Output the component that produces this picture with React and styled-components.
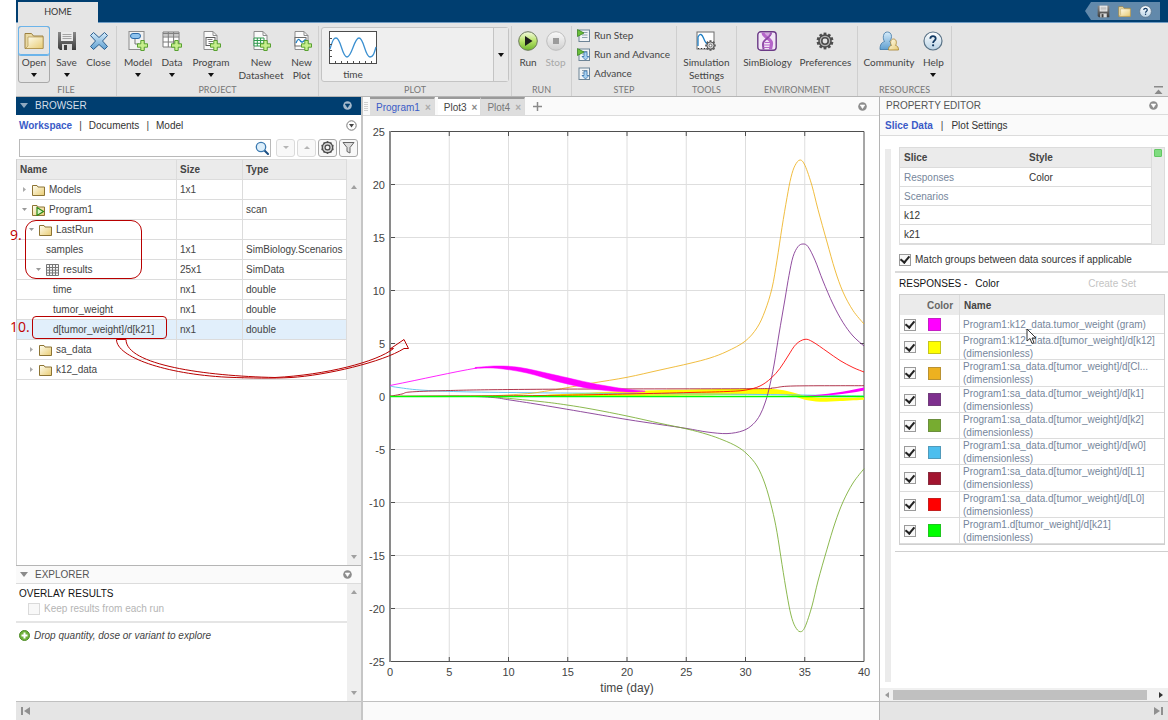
import React from "react";
import styled, { createGlobalStyle } from "styled-components";

const navy = "#003e70";
const ribbonGrey = "#e5e5e5";
const line = "#dcdcdc";
const sans = `"Liberation Sans", Arial, sans-serif`;
const ui = `Lato, "Open Sans", sans-serif`;

/* ---------- data ---------- */

const workspaceRows = [
  { level: 0, caret: "right", icon: "folder", name: "Models", size: "1x1", type: "" },
  { level: 0, caret: "down", icon: "program", name: "Program1", size: "", type: "scan" },
  { level: 1, caret: "down", icon: "folder", name: "LastRun", size: "", type: "" },
  { level: 2, name: "samples", size: "1x1", type: "SimBiology.Scenarios" },
  { level: 2, caret: "down", icon: "grid", name: "results", size: "25x1", type: "SimData" },
  { level: 3, name: "time", size: "nx1", type: "double" },
  { level: 3, name: "tumor_weight", size: "nx1", type: "double" },
  { level: 3, name: "d[tumor_weight]/d[k21]", size: "nx1", type: "double", selected: true },
  { level: 1, caret: "right", icon: "folder", name: "sa_data", size: "", type: "" },
  { level: 1, caret: "right", icon: "folder", name: "k12_data", size: "", type: "" },
];

const slices = [
  { name: "Responses", style: "Color", muted: true },
  { name: "Scenarios", style: "", muted: true },
  { name: "k12", style: "" },
  { name: "k21", style: "" },
];

const responses = [
  { color: "#ff00ff", name: "Program1:k12_data.tumor_weight (gram)" },
  { color: "#ffff00", name: "Program1:k12_data.d[tumor_weight]/d[k12]", unit: "(dimensionless)" },
  { color: "#edb120", name: "Program1:sa_data.d[tumor_weight]/d[Cl...", unit: "(dimensionless)" },
  { color: "#7e2f8e", name: "Program1:sa_data.d[tumor_weight]/d[k1]", unit: "(dimensionless)" },
  { color: "#77ac30", name: "Program1:sa_data.d[tumor_weight]/d[k2]", unit: "(dimensionless)" },
  { color: "#4dbeee", name: "Program1:sa_data.d[tumor_weight]/d[w0]", unit: "(dimensionless)" },
  { color: "#a2142f", name: "Program1:sa_data.d[tumor_weight]/d[L1]", unit: "(dimensionless)" },
  { color: "#ff0000", name: "Program1:sa_data.d[tumor_weight]/d[L0]", unit: "(dimensionless)" },
  { color: "#00ff00", name: "Program1.d[tumor_weight]/d[k21]", unit: "(dimensionless)" },
];

const curves = [
  {
    color: "#4dbeee",
    points: [[27, 270], [34, 271.3], [57, 274], [97, 275.7], [164, 276.7], [264, 277.5], [400, 278.5], [501, 280]],
  },
  {
    color: "#edb120",
    points: [
      [27, 280.5], [110, 280.3], [160, 278], [184, 275], [204, 271.7], [230, 267], [264, 261.3], [297, 254], [327, 247.3],
      [347, 242], [364, 235.4], [382, 225.3], [394, 211.8], [402, 194.9], [409, 172.2], [414, 144.2], [419, 111.4],
      [424, 81.6], [428, 61.3], [432, 49.5], [437, 44], [442, 49.5], [449, 69.8], [455, 93.5], [464, 126],
      [472, 154], [480, 176], [490, 194.5], [501, 208],
    ],
  },
  {
    color: "#7e2f8e",
    points: [
      [27, 280.5], [100, 280.3], [130, 281.5], [147, 284], [177, 288.7], [230, 297.7], [264, 303.5], [297, 308.5],
      [324, 312.5], [344, 316], [364, 317.6], [380, 314.7], [390, 308.3], [397, 299], [402, 287], [406, 273],
      [411, 249], [416, 218], [422, 183], [426, 159.4], [430, 140.8], [435, 130.6], [440, 128], [445, 130.6],
      [452, 144.2], [460, 165], [470, 188.1], [480, 206.5], [490, 220], [501, 230],
    ],
  },
  {
    color: "#77ac30",
    points: [
      [27, 280.5], [110, 280.3], [130, 281], [177, 285.5], [204, 289], [230, 293.3], [264, 300], [297, 307.3],
      [324, 313], [344, 318.3], [360, 324], [374, 330.5], [384, 338], [394, 350], [402, 368], [409, 392.6],
      [414, 416.3], [419, 448.4], [424, 478.8], [428, 499], [432, 510.3], [437, 515.7], [442, 511], [449, 490],
      [455, 465], [464, 433.2], [472, 407], [480, 385.9], [490, 367], [501, 352.7],
    ],
  },
  {
    color: "#a2142f",
    points: [[27, 280.3], [39, 278], [47, 276], [80, 274.7], [130, 273.7], [230, 273], [390, 272.7], [410, 272], [430, 270], [501, 269.7]],
  },
  {
    color: "#ff0000",
    points: [
      [27, 280.3], [177, 279.5], [264, 278], [327, 276.5], [364, 275.5], [383, 274], [397, 270], [408, 262.3],
      [417, 252.3], [425, 240], [433, 228.3], [442, 223.3], [450, 226], [464, 235.5], [477, 244.5], [490, 251.5], [501, 256],
    ],
  },
];

// Catmull-Rom through the points, written as cubic segments
const smooth = (pts, start = "M") => {
  let d = `${start}${pts[0][0]} ${pts[0][1]}`;
  for (let i = 0; i < pts.length - 1; i++) {
    const a = pts[i - 1] || pts[i];
    const b = pts[i];
    const c = pts[i + 1];
    const e = pts[i + 2] || c;
    d += `C${b[0] + (c[0] - a[0]) / 6} ${b[1] + (c[1] - a[1]) / 6} ${c[0] - (e[0] - b[0]) / 6} ${c[1] - (e[1] - b[1]) / 6} ${c[0]} ${c[1]}`;
  }
  return d;
};

const band = (top, bottom) => `${smooth(top)}${smooth(bottom, "L")}Z`;

const magentaBand = band(
  [[112, 251.5], [134, 250], [157, 251.5], [190, 258.5], [230, 267.5], [264, 273.2], [282, 275]],
  [[282, 275.5], [264, 276], [230, 273], [197, 266.2], [164, 257], [134, 252.3], [112, 252.3]]
);

const yellowBand = band(
  [[170, 279.5], [264, 275], [330, 273.5], [397, 272.8], [417, 273.8], [430, 276.6], [441, 279.5], [457, 281.7], [501, 281.4]],
  [[501, 283.7], [477, 285], [457, 285.7], [443, 284], [433, 281], [423, 279], [403, 278], [330, 279.5], [170, 280.5]]
);

/* ---------- icons ---------- */

const Defs = () => (
  <HiddenSvg width="0" height="0" aria-hidden="true">
    <defs>
      <linearGradient id="gFolder" x1="0" y1="0" x2="1" y2="1">
        <stop offset="0" stopColor="#fffef2" />
        <stop offset="1" stopColor="#e8cb72" />
      </linearGradient>
      <linearGradient id="gGreen" x1="0" y1="0" x2="0" y2="1">
        <stop offset="0" stopColor="#f4fbe0" />
        <stop offset="0.5" stopColor="#b9e36a" />
        <stop offset="1" stopColor="#6fb52c" />
      </linearGradient>
      <linearGradient id="gBlue" x1="0" y1="0" x2="0" y2="1">
        <stop offset="0" stopColor="#d5ebfa" />
        <stop offset="1" stopColor="#5f9fd0" />
      </linearGradient>
      <linearGradient id="gSteel" x1="0" y1="0" x2="0" y2="1">
        <stop offset="0" stopColor="#8a8a8a" />
        <stop offset="1" stopColor="#3c3c3c" />
      </linearGradient>
      <linearGradient id="gPale" x1="0" y1="0" x2="0" y2="1">
        <stop offset="0" stopColor="#ffffff" />
        <stop offset="1" stopColor="#b9d3e6" />
      </linearGradient>
      <linearGradient id="gGrey" x1="0" y1="0" x2="0" y2="1">
        <stop offset="0" stopColor="#fafafa" />
        <stop offset="1" stopColor="#cfcfcf" />
      </linearGradient>
    </defs>
  </HiddenSvg>
);

const Icon = ({ size = 20, box = 20, children }) => (
  <svg width={size} height={size} viewBox={`0 0 ${box} ${box}`} fill="none" aria-hidden="true">
    {children}
  </svg>
);

const FolderIcon = ({ size = 20 }) => (
  <Icon size={size}>
    <path d="M1 17.500V2.500h6.500l2 2.500H19v12.500z" fill="#e9d9a4" stroke="#9c8040" />
    <path d="M4 6h15v11.500H1.500L4 15z" fill="url(#gFolder)" stroke="#a88a42" strokeWidth="0.600" />
  </Icon>
);

const SaveIcon = ({ size = 20 }) => (
  <Icon size={size}>
    <path d="M1 1h18v18H3l-2-2z" fill="url(#gSteel)" />
    <rect x="4" y="1" width="12" height="9" fill="#ececec" />
    <path d="M5.500 3.500h9M5.500 5.500h9M5.500 7.500h9" stroke="#a5a5a5" />
    <rect x="5" y="13" width="10" height="6" fill="#dadada" />
    <rect x="7" y="14" width="3" height="5" fill="#3f3f3f" />
  </Icon>
);

const CloseIcon = () => (
  <Icon>
    <path
      d="M1.500 4.500l3-3L10 6.500l5.500-5 3 3L13.500 10l5 5.500-3 3-5.500-5-5.500 5-3-3 5-5.500z"
      fill="url(#gBlue)"
      stroke="#2d5f8f"
      strokeLinejoin="round"
    />
  </Icon>
);

const Plus = () => (
  <path
    d="M12.800 9.500h3.400v3.300h3.300v3.400h-3.300v3.300h-3.400v-3.300H9.500v-3.400h3.300z"
    fill="#c6ee8c"
    stroke="#4c9a24"
    strokeWidth="0.900"
  />
);

const ModelIcon = () => (
  <Icon>
    <rect x="1" y="0.500" width="15" height="18" fill="#f2f2f2" stroke="#8c8c8c" />
    <rect x="2.500" y="2.500" width="10" height="5" rx="2.500" fill="#8ec3ee" stroke="#2b6aa8" />
    <path d="M7 8v5h4" stroke="#777" />
    <Plus />
  </Icon>
);

const DataIcon = () => (
  <Icon>
    <path d="M1 1h16v15H1z" fill="#fff" stroke="#7a7a7a" />
    <path d="M1 2.500h16M1 6h16M1 11h16M6.300 1v15M11.600 1v15" stroke="#7a7a7a" />
    <path d="M1.500 1.500h15v4h-15z" fill="#8a8a8a" fillOpacity="0.450" />
    <Plus />
  </Icon>
);

const Sheet = () => <path d="M3 0.500h9l4 4v14H3z" fill="#fafafa" stroke="#8c8c8c" />;

const ProgramIcon = () => (
  <Icon>
    <Sheet />
    <path d="M12 0.500v4h4" stroke="#8c8c8c" />
    <rect x="5" y="6.500" width="9" height="8" fill="#fff" stroke="#5c5c5c" />
    <path d="M6.500 8.500h5M7.500 10.500h5M7.500 12.500h4" stroke="#777" />
    <Plus />
  </Icon>
);

const DatasheetIcon = () => (
  <Icon>
    <Sheet />
    <path d="M12 0.500v4h4" stroke="#8c8c8c" />
    <path d="M3 7h10v8H3zM3 9.500h10M3 12.300h10M6.300 7v8M9.600 7v8" fill="#fff" stroke="#2f9a4e" />
    <Plus />
  </Icon>
);

const PlotIcon = () => (
  <Icon>
    <Sheet />
    <path d="M12 0.500v4h4" stroke="#8c8c8c" />
    <rect x="3" y="6.500" width="11" height="8.500" fill="#fff" stroke="#6c6c6c" />
    <path d="M4 12c2-5 3-4 4.500-2s2.500 1 5-1.500" stroke="#1f7fc4" strokeWidth="1.300" />
    <Plus />
  </Icon>
);

const RunIcon = () => (
  <Icon>
    <circle cx="10" cy="10" r="9.300" fill="url(#gGreen)" stroke="#6c7a5c" />
    <path d="M7 5l7.500 5L7 15z" fill="#1d1d1d" />
  </Icon>
);

const StopIcon = () => (
  <Icon>
    <circle cx="10" cy="10" r="9.300" fill="url(#gGrey)" stroke="#bdbdbd" />
    <rect x="7" y="7" width="6" height="6" fill="#9b9b9b" />
  </Icon>
);

const StepIcon = ({ play, arrow }) => (
  <Icon size={13} box={13}>
    <rect x="2" y="1" width="10.500" height="11.500" fill="#f1f4f6" stroke="#6d8496" />
    <path d="M5 3.500h5.500M5 6h5.500M5 8.500h5.500" stroke="#8fa2b0" />
    {arrow && <path d="M7 4v4.500H5l3.500 3.500 3.500-3.500h-2V4z" fill="#a9d2f0" stroke="#2b6aa8" strokeWidth="0.700" />}
    {play && <path d="M0.500 0.500L7 4 0.500 7.500z" fill="#6bbf3a" stroke="#2c7a16" strokeWidth="0.700" />}
  </Icon>
);

const gearTeeth = (cx, cy, r, width, color, count = 10) =>
  Array.from({ length: count }, (_, i) => (
    <rect
      key={i}
      x={cx - width / 2}
      y={cy - r}
      width={width}
      height={r * 0.4}
      fill={color}
      transform={`rotate(${(i * 360) / count} ${cx} ${cy})`}
    />
  ));

const SettingsIcon = () => (
  <Icon>
    <rect x="1" y="1" width="17" height="17" fill="#fff" stroke="#6d6d6d" />
    <path d="M2 15V6c2-4 4-3 5.500 1s2.500 6 4.500 6" stroke="#1f7fc4" strokeWidth="1.300" />
    <path d="M2 17.500h10" stroke="#333" strokeDasharray="1 2" />
    {gearTeeth(14.5, 14.5, 5.3, 2, "#5d5d5d", 8)}
    <circle cx="14.500" cy="14.500" r="3.600" fill="#d6d6d6" stroke="#555" />
    <circle cx="14.500" cy="14.500" r="1.400" fill="#fff" stroke="#555" strokeWidth="0.800" />
  </Icon>
);

const SimBiologyIcon = () => (
  <Icon>
    <rect x="0.800" y="0.800" width="18.400" height="18.400" rx="3" fill="#f2e6f6" stroke="#6b3a86" strokeWidth="1.400" />
    <path d="M6 1.500c0 5 8.500 6 8.500 10.500 0 3-1 5-1 6.500" stroke="#b565c9" strokeWidth="3.200" />
    <path d="M14 1.500C14 7 6 8 6 13c0 3 .500 4 .500 5.500" stroke="#8d4aa6" strokeWidth="2" />
    <path d="M6 3h8M7.500 5h5M8 11.500h6M6.500 14h7M6.500 16.500h7" stroke="#b565c9" strokeWidth="1.200" />
  </Icon>
);

const GearIcon = () => (
  <Icon>
    {gearTeeth(10, 10, 8.4, 2.8, "#4d4d4d", 10)}
    <circle cx="10" cy="10" r="6" fill="#b5b5b5" stroke="#4d4d4d" strokeWidth="1.400" />
    <circle cx="10" cy="10" r="3.200" fill="#e5e5e5" stroke="#4d4d4d" strokeWidth="1.600" />
  </Icon>
);

const SmallGearIcon = () => (
  <Icon size={13} box={13}>
    <circle cx="6.500" cy="6.500" r="5.200" fill="#d0d0d0" stroke="#4f4f4f" strokeWidth="1.400" />
    <circle cx="6.500" cy="6.500" r="2.500" fill="#f8f8f8" stroke="#4f4f4f" strokeWidth="1.400" />
    {gearTeeth(6.5, 6.5, 6.4, 1.4, "#4f4f4f", 10).map((tooth) => tooth)}
    <circle cx="6.500" cy="6.500" r="3.900" stroke="#d0d0d0" strokeWidth="1.200" />
  </Icon>
);

const CommunityIcon = () => (
  <Icon>
    <path
      d="M1 18.500c0-5 1.500-7 4.500-8C4.500 9 4 7 4.500 4.500 5 2 6.500 1 8.500 1s4 1.500 4 4.500c0 2-1 4-2 5 1.500 1 2 3 2 8z"
      fill="url(#gBlue)"
      stroke="#3f77a6"
      strokeWidth="0.800"
    />
    <path
      d="M9.500 19c0-3 1-4 3-4.600-1.500-2-1.200-6.400 2-6.400s3.500 4.400 2 6.400c2 .600 3 1.600 3 4.600z"
      fill="url(#gFolder)"
      stroke="#a8842d"
      strokeWidth="0.800"
    />
  </Icon>
);

const HelpIcon = ({ size = 20 }) => (
  <Icon size={size}>
    <circle cx="10" cy="10" r="9" fill="url(#gPale)" stroke="#5a7387" strokeWidth="1.200" />
    <path d="M7.300 7.800c0-3.600 5.400-3.400 5.400-.300 0 2-2.600 2.300-2.600 4.500" stroke="#123a63" strokeWidth="1.800" />
    <circle cx="10.100" cy="14.300" r="1.100" fill="#123a63" />
  </Icon>
);

const WaveThumb = () => (
  <svg width="48" height="33" viewBox="0 0 48 33" fill="none" aria-hidden="true">
    <rect x="0.500" y="0.500" width="47" height="32" fill="#fff" stroke="#4c4c4c" />
    <path d="M1 18C4 8 5 7 7 7c5 0 6 19 11 19S25 7 30 7s6 19 11 19c3 0 4-3 6-10" stroke="#3a8fd0" strokeWidth="1.300" />
    <path d="M1 7.500h2M1 13.500h2M1 19.500h2M1 25.500h2M6.500 32v-2M12.500 32v-2M18.500 32v-2M24.500 32v-2M30.500 32v-2M36.500 32v-2M42.500 32v-2" stroke="#4c4c4c" />
  </svg>
);

const SearchIcon = () => (
  <Icon size={14} box={14}>
    <path d="M9 9l4 4" stroke="#1c4f82" strokeWidth="2" strokeLinecap="round" />
    <circle cx="6" cy="6" r="4.700" fill="#dceefa" stroke="#3b79b0" strokeWidth="1.300" />
  </Icon>
);

const FilterIcon = () => (
  <Icon size={13} box={13}>
    <path d="M1 1.500h11L8 6.500V12l-3-1.500v-4z" fill="#ddd" stroke="#666" />
  </Icon>
);

const RoundMenuIcon = ({ ring = "#8d8d8d", fill = "#fff" }) => (
  <Icon size={9} box={9}>
    <circle cx="4.500" cy="4.500" r="4.300" fill={ring} />
    <path d="M2.200 3h4.600L4.500 6.600z" fill={fill} stroke={fill} strokeWidth="0.600" />
  </Icon>
);

const OutlineMenuIcon = () => (
  <Icon size={11} box={11}>
    <circle cx="5.500" cy="5.500" r="4.700" fill="#fff" stroke="#777" />
    <path d="M3 4h5L5.500 7.500z" fill="#444" />
  </Icon>
);

const Triangle = ({ dir = "down", w = 7, h = 4, color = "#111" }) => {
  const d = {
    down: `M0 0h${w}L${w / 2} ${h}z`,
    up: `M0 ${h}h${w}L${w / 2} 0z`,
    right: `M0 0v${h}L${w} ${h / 2}z`,
    left: `M${w} 0v${h}L0 ${h / 2}z`,
  }[dir];
  return (
    <svg width={w} height={h} viewBox={`0 0 ${w} ${h}`} aria-hidden="true">
      <path d={d} fill={color} />
    </svg>
  );
};

const TreeFolder = () => (
  <svg width="13" height="12" viewBox="0 0 13 12" fill="none" aria-hidden="true">
    <path d="M0.500 11.500v-10H5l1 1.500h6.500v8.500z" fill="url(#gFolder)" stroke="#8d7434" />
  </svg>
);

const TreeProgram = () => (
  <svg width="13" height="12" viewBox="0 0 13 12" fill="none" aria-hidden="true">
    <path d="M0.500 11.500v-10H5l1 1.500h6.500v8.500z" fill="url(#gFolder)" stroke="#8d7434" />
    <path d="M5 3.500l6.500 4L5 11.500z" fill="#d9f3c8" stroke="#2c8a16" strokeWidth="1.200" />
  </svg>
);

const TreeGrid = () => (
  <svg width="13" height="12" viewBox="0 0 13 12" fill="none" aria-hidden="true">
    <path d="M0.500 0.500h12v11H0.500zM0.500 3.500h12M0.500 6.200h12M0.500 8.900h12M3.500 0.500v11M6.500 0.500v11M9.500 0.500v11" fill="#f6f6f6" stroke="#777" />
  </svg>
);

const treeIcons = { folder: <TreeFolder />, program: <TreeProgram />, grid: <TreeGrid /> };

/* ---------- plot ---------- */

const PlotChart = () => (
  <ChartSvg viewBox="0 0 516 585" role="img" aria-label="time (day)">
    {[1, 2, 3, 4, 5, 6, 7].map((i) => (
      <path key={i} d={`M${27 + i * 59.25} 16v530`} stroke="#dedede" />
    ))}
    {[1, 2, 3, 4, 5, 6, 7, 8, 9].map((i) => (
      <path key={i} d={`M27 ${15.5 + i * 53}H501`} stroke="#dedede" />
    ))}
    <path d="M26.500 15.500H501V545.500H26.500" fill="none" stroke="#4f4f4f" />
    <path d="M27 15v531" stroke="#8a8a8a" strokeWidth="2" />
    {[1, 2, 3, 4, 5, 6, 7].map((i) => (
      <path key={i} d={`M${27 + i * 59.25} 16v4m0 521v4`} stroke="#4f4f4f" />
    ))}
    {[1, 2, 3, 4, 5, 6, 7, 8, 9].map((i) => (
      <path key={i} d={`M28 ${15.5 + i * 53}h4m465 0h4`} stroke="#4f4f4f" />
    ))}
    <path d={yellowBand} fill="#ffff00" />
    {curves.map((curve) => (
      <path key={curve.color} d={smooth(curve.points)} fill="none" stroke={curve.color} strokeOpacity="0.850" />
    ))}
    <path d="M27 269.500C60 263 90 256 114 252" fill="none" stroke="#ff00ff" strokeOpacity="0.850" />
    <path d={magentaBand} fill="#ff00ff" stroke="#ff00ff" strokeWidth="0.500" />
    <path d="M441 279.700C465 278.500 480 276 501 271.500V274.500C480 278.500 465 280 441 280z" fill="#ff00ff" />
    <path d="M27 280.500H501" stroke="#00ff00" strokeWidth="1.500" />
    {[25, 20, 15, 10, 5, 0, -5, -10, -15, -20, -25].map((v, i) => (
      <ChartText key={v} x="22" y={19.5 + i * 53} textAnchor="end">
        {v}
      </ChartText>
    ))}
    {[0, 5, 10, 15, 20, 25, 30, 35, 40].map((v, i) => (
      <ChartText key={v} x={27 + i * 59.25} y="560" textAnchor="middle">
        {v}
      </ChartText>
    ))}
    <ChartTitle x="264" y="576" textAnchor="middle">
      time (day)
    </ChartTitle>
  </ChartSvg>
);

/* ---------- ribbon ---------- */

const Tool = ({ icon, label, menu, w, disabled, active }) => (
  <ToolButton $w={w} $active={active} disabled={disabled}>
    <ToolIcon $active={active}>{icon}</ToolIcon>
    <ToolLabel>{label}</ToolLabel>
    {menu && (
      <MenuMark>
        <Triangle w={6} h={4} />
      </MenuMark>
    )}
  </ToolButton>
);

const Ribbon = () => (
  <RibbonBar>
    <Section>
      <Tools>
        <Tool w={32} icon={<FolderIcon />} label="Open" menu active />
        <Tool w={33} icon={<SaveIcon />} label="Save" menu />
        <Tool w={31} icon={<CloseIcon />} label="Close" />
      </Tools>
      <SectionName>FILE</SectionName>
    </Section>
    <Section>
      <Tools>
        <Tool w={38} icon={<ModelIcon />} label="Model" menu />
        <Tool w={30} icon={<DataIcon />} label="Data" menu />
        <Tool w={48} icon={<ProgramIcon />} label="Program" menu />
        <Tool w={52} icon={<DatasheetIcon />} label="New Datasheet" />
        <Tool w={29} icon={<PlotIcon />} label="New Plot" />
      </Tools>
      <SectionName>PROJECT</SectionName>
    </Section>
    <Section>
      <Gallery>
        <GalleryItem>
          <WaveThumb />
          time
        </GalleryItem>
        <GalleryMore aria-label="More plots">
          <Triangle w={6} />
        </GalleryMore>
      </Gallery>
      <SectionName>PLOT</SectionName>
    </Section>
    <Section>
      <Tools>
        <Tool w={28} icon={<RunIcon />} label="Run" />
        <Tool w={27} icon={<StopIcon />} label="Stop" disabled />
      </Tools>
      <SectionName>RUN</SectionName>
    </Section>
    <Section>
      <StepList>
        <StepButton>
          <StepIcon play /> Run Step
        </StepButton>
        <StepButton>
          <StepIcon play arrow /> Run and Advance
        </StepButton>
        <StepButton>
          <StepIcon arrow /> Advance
        </StepButton>
      </StepList>
      <SectionName>STEP</SectionName>
    </Section>
    <Section>
      <Tools>
        <Tool w={55} icon={<SettingsIcon />} label="Simulation Settings" />
      </Tools>
      <SectionName>TOOLS</SectionName>
    </Section>
    <Section>
      <Tools>
        <Tool w={57} icon={<SimBiologyIcon />} label="SimBiology" />
        <Tool w={59} icon={<GearIcon />} label="Preferences" />
      </Tools>
      <SectionName>ENVIRONMENT</SectionName>
    </Section>
    <Section>
      <Tools>
        <Tool w={58} icon={<CommunityIcon />} label="Community" />
        <Tool w={31} icon={<HelpIcon />} label="Help" menu />
      </Tools>
      <SectionName>RESOURCES</SectionName>
    </Section>
    <Collapse aria-label="Minimize toolstrip">
      <svg width="9" height="8" viewBox="0 0 9 8" aria-hidden="true">
        <path d="M0 0h9v1.500H0zM0.500 8h8l-4-4.500z" fill="#8a8a8a" />
      </svg>
    </Collapse>
  </RibbonBar>
);

/* ---------- page ---------- */

const App = () => (
  <Page>
    <GlobalStyle />
    <Defs />
    <TitleBar>
      <HomeTab href="#home">HOME</HomeTab>
      <QuickAccess>
        <QuickButton aria-label="Save">
          <SaveIcon size={13} />
        </QuickButton>
        <QuickButton aria-label="Open">
          <FolderIcon size={13} />
        </QuickButton>
        <QuickButton aria-label="Help">
          <HelpIcon size={13} />
        </QuickButton>
      </QuickAccess>
    </TitleBar>
    <Ribbon />
    <Main>
      <LeftColumn>
        <PanelHead $dark>
          <Triangle w={8} h={5} color="#8fa9c0" />
          <PanelTitle>BROWSER</PanelTitle>
          <RoundMenuIcon ring="#a5b9cb" fill={navy} />
        </PanelHead>
        <SubTabs>
          <SubTab href="#workspace" $on>Workspace</SubTab>|
          <SubTab href="#documents">Documents</SubTab>|
          <SubTab href="#model">Model</SubTab>
          <TabsEnd>
            <OutlineMenuIcon />
          </TabsEnd>
        </SubTabs>
        <SearchRow>
          <SearchBox>
            <SearchInput aria-label="Search workspace" />
            <SearchIcon />
          </SearchBox>
          <SquareButton disabled aria-label="Next match">
            <Triangle w={6} h={3} color="#b5b5b5" />
          </SquareButton>
          <SquareButton disabled aria-label="Previous match">
            <Triangle dir="up" w={6} h={3} color="#b5b5b5" />
          </SquareButton>
          <SquareButton aria-label="Search options">
            <SmallGearIcon />
          </SquareButton>
          <SquareButton aria-label="Filter">
            <FilterIcon />
          </SquareButton>
        </SearchRow>
        <TreeArea>
          <TreeMain>
            <TreeTable>
              <colgroup>
                <NameCol />
                <SizeCol />
                <col />
              </colgroup>
              <thead>
                <tr>
                  <TreeHead>Name</TreeHead>
                  <TreeHead>Size</TreeHead>
                  <TreeHead>Type</TreeHead>
                </tr>
              </thead>
              <tbody>
                {workspaceRows.map((row) => (
                  <TreeRow key={row.name} $selected={row.selected}>
                    <TreeCell>
                      <NameBox $level={row.level}>
                        <CaretBox>
                          {row.caret === "right" && <Triangle dir="right" w={3} h={5} color="#aaa" />}
                          {row.caret === "down" && <Triangle w={5} h={3} color="#999" />}
                        </CaretBox>
                        {row.icon && treeIcons[row.icon]}
                        {row.name}
                      </NameBox>
                    </TreeCell>
                    <TreeCell>{row.size}</TreeCell>
                    <TreeCell>{row.type}</TreeCell>
                  </TreeRow>
                ))}
              </tbody>
            </TreeTable>
          </TreeMain>
          <Gutter $head>
            <Triangle dir="up" w={6} h={4} color="#a0a0a0" />
            <Triangle w={6} h={4} color="#a0a0a0" />
          </Gutter>
        </TreeArea>
        <Explorer>
          <PanelHead>
            <Triangle w={8} h={5} color="#8a8a8a" />
            <PanelTitle>EXPLORER</PanelTitle>
            <RoundMenuIcon />
          </PanelHead>
          <ExplorerBody>
            <ExplorerContent>
              <Overlay>
                <OverlayTitle>OVERLAY RESULTS</OverlayTitle>
                <KeepLabel>
                  <CheckBox type="checkbox" disabled />
                  Keep results from each run
                </KeepLabel>
              </Overlay>
              <DropHint>
                <svg width="11" height="11" viewBox="0 0 11 11" aria-hidden="true">
                  <circle cx="5.500" cy="5.500" r="5" fill="#6fb13a" stroke="#4c8a24" />
                  <path d="M5.500 2.500v6M2.500 5.500h6" stroke="#fff" strokeWidth="2" />
                </svg>
                Drop quantity, dose or variant to explore
              </DropHint>
            </ExplorerContent>
            <Gutter>
              <Triangle dir="up" w={6} h={4} color="#a0a0a0" />
              <Triangle w={6} h={4} color="#a0a0a0" />
            </Gutter>
          </ExplorerBody>
        </Explorer>
        <StatusBar $grey>
          <svg width="9" height="8" viewBox="0 0 9 8" aria-hidden="true">
            <path d="M0 0h2v8H0zM9 0v8L3 4z" fill="#909090" />
          </svg>
        </StatusBar>
      </LeftColumn>

      <CenterColumn>
        <DocTabs>
          <Grip />
          <DocTab $link>
            Program1 <TabClose>×</TabClose>
          </DocTab>
          <TabGap />
          <DocTab $on>
            Plot3 <TabClose $on>×</TabClose>
          </DocTab>
          <DocTab>
            Plot4 <TabClose>×</TabClose>
          </DocTab>
          <AddTab aria-label="New tab">
            <svg width="9" height="9" viewBox="0 0 9 9" aria-hidden="true">
              <path d="M4.500 0v9M0 4.500h9" stroke="#8a8a8a" strokeWidth="1.500" />
            </svg>
          </AddTab>
          <RoundMenuIcon />
        </DocTabs>
        <PlotArea>
          <PlotChart />
        </PlotArea>
        <StatusBar />
      </CenterColumn>

      <RightColumn>
        <PanelHead $plain>
          <PanelTitle>PROPERTY EDITOR</PanelTitle>
          <RoundMenuIcon />
        </PanelHead>
        <SubTabs $line>
          <SubTab href="#slice" $on>Slice Data</SubTab>|
          <SubTab href="#settings">Plot Settings</SubTab>
        </SubTabs>
        <EditorBody>
          <SideStrip />
          <EditorContent>
            <SliceWrap>
              <SliceTable>
                <thead>
                  <tr>
                    <SliceHead $w={125}>Slice</SliceHead>
                    <SliceHead>Style</SliceHead>
                  </tr>
                </thead>
                <tbody>
                  {slices.map((s) => (
                    <tr key={s.name}>
                      <SliceCell $muted={s.muted}>{s.name}</SliceCell>
                      <SliceCell>{s.style}</SliceCell>
                    </tr>
                  ))}
                </tbody>
              </SliceTable>
              <SliceGutter>
                <GreenMark />
              </SliceGutter>
            </SliceWrap>
            <MatchLabel>
              <CheckBox type="checkbox" defaultChecked />
              Match groups between data sources if applicable
            </MatchLabel>
            <ResponseHead>
              <span>RESPONSES -</span>
              <span>Color</span>
              <CreateSet disabled>Create Set</CreateSet>
            </ResponseHead>
            <ResponseTable>
              <thead>
                <tr>
                  <CheckHead aria-label="Shown" />
                  <ColorHead>Color</ColorHead>
                  <NameHead>Name</NameHead>
                </tr>
              </thead>
              <tbody>
                {responses.map((r) => (
                  <tr key={r.name}>
                    <MarkCell>
                      <CheckBox type="checkbox" defaultChecked aria-label={r.name} />
                    </MarkCell>
                    <MarkCell>
                      <Swatch $color={r.color} />
                    </MarkCell>
                    <ResponseName $single={!r.unit}>
                      {r.name}
                      {r.unit && <br />}
                      {r.unit}
                    </ResponseName>
                  </tr>
                ))}
              </tbody>
            </ResponseTable>
            <EndRule />
          </EditorContent>
        </EditorBody>
        <ScrollRow>
          <Triangle dir="left" w={4} h={6} color="#9a9a9a" />
          <ScrollThumb />
          <Triangle dir="right" w={4} h={6} color="#333" />
        </ScrollRow>
        <StatusBar $grey $end>
          <svg width="9" height="8" viewBox="0 0 9 8" aria-hidden="true">
            <path d="M7 0h2v8H7zM0 0v8l6-4z" fill="#909090" />
          </svg>
        </StatusBar>
      </RightColumn>
    </Main>

    <CalloutBox $x={25} $y={220} $w={117} $h={59} $r={11} />
    <CalloutBox $x={32} $y={316} $w={135} $h={23} $r={4} />
    <CalloutNumber $y={225}>9.</CalloutNumber>
    <CalloutNumber $y={317}>10.</CalloutNumber>
    <ArrowSvg width="300" height="44" viewBox="0 0 300 44" aria-hidden="true">
      <path
        d="M1.500 2.500C1.500 20 50 37 112 40.200c25 1 45 1.300 64 .300C210 38.500 268 25 289 11.500h4.500L289 2.500l-14 9.500 3.500-.500C262 25 210 38 160 40.500 90 39 11 28 11 2.500z"
        fill="none"
        stroke="#b80000"
      />
    </ArrowSvg>
    <CursorSvg width="12" height="17" viewBox="0 0 12 17" aria-hidden="true">
      <path d="M1 1v12l3-2.500L6 15.500l2-1-2-4.500h4z" fill="#fff" stroke="#333" />
    </CursorSvg>
  </Page>
);

const GlobalStyle = createGlobalStyle`
  * { box-sizing: border-box; }
  body { margin: 0; background: #fff; }
  button, input { font: inherit; color: inherit; }
  svg { flex: none; display: block; }
`;

const HiddenSvg = styled.svg`
  position: absolute;
`;

const Page = styled.div`
  position: relative;
  min-height: 100vh;
  padding-left: 16px;
  display: flex;
  flex-direction: column;
  background: #fff;
  font-family: ${sans};
  font-size: 10px;
  line-height: 13px;
  color: #444;
`;

const TitleBar = styled.header`
  height: 23px;
  padding: 2px 8px 0 2px;
  display: flex;
  justify-content: space-between;
  align-items: flex-start;
  background: ${navy};
  border-bottom: 1px solid #6f9cc4;
`;

const HomeTab = styled.a`
  height: 21px;
  width: 80px;
  text-align: center;
  line-height: 19px;
  font-family: ${ui};
  font-size: 9px;
  color: #333;
  text-decoration: none;
  background: ${ribbonGrey};
`;

const QuickAccess = styled.div`
  height: 18px;
  padding: 0 8px 0 12px;
  display: flex;
  align-items: center;
  gap: 8px;
  background: #6289ab;
  clip-path: polygon(6px 0, 100% 0, 100% 100%, 6px 100%, 0 50%);
`;

const QuickButton = styled.button`
  padding: 0;
  border: 0;
  background: none;
`;

const RibbonBar = styled.div`
  height: 74px;
  padding-top: 3px;
  display: flex;
  background: ${ribbonGrey};
  border-bottom: 1px solid #b5b5b5;
  font-family: ${ui};
`;

const Section = styled.section`
  padding: 0 2px;
  display: flex;
  flex-direction: column;
  border-right: 1px solid #cfcfcf;
`;

const Tools = styled.div`
  height: 57px;
  display: flex;
`;

const SectionName = styled.div`
  text-align: center;
  font-size: 9px;
  line-height: 13px;
  color: #777;
`;

const ToolButton = styled.button`
  width: ${(p) => p.$w}px;
  height: 57px;
  padding: 0;
  display: flex;
  flex-direction: column;
  align-items: center;
  font-size: 10px;
  line-height: 13px;
  color: ${(p) => (p.disabled ? "#a8a8a8" : "#444")};
  background: none;
  border: 1px solid ${(p) => (p.$active ? "#a9a9a9" : "transparent")};
  border-radius: 3px;
`;

const ToolIcon = styled.span`
  width: 100%;
  height: 28px;
  flex: none;
  display: flex;
  align-items: center;
  justify-content: center;
  border-bottom: 1px solid ${(p) => (p.$active ? "#6cb4ea" : "transparent")};
  box-shadow: ${(p) => (p.$active ? "0 0 0 1px #6cb4ea" : "none")};
  border-radius: 2px;
`;

const ToolLabel = styled.span`
  padding-top: 1px;
  text-align: center;
`;

const MenuMark = styled.span`
  padding-top: 4px;
`;

const Gallery = styled.div`
  width: 188px;
  height: 55px;
  margin: 1px 0;
  display: flex;
  border: 1px solid #c4c4c4;
  border-radius: 3px;
  background: #efefef;
`;

const GalleryItem = styled.button`
  padding: 3px 7px 0;
  display: flex;
  flex-direction: column;
  align-items: center;
  gap: 4px;
  font-size: 10px;
  line-height: 13px;
  border: 0;
  background: none;
`;

const GalleryMore = styled.button`
  width: 15px;
  margin-left: auto;
  padding: 0;
  display: flex;
  align-items: center;
  justify-content: center;
  border: 0;
  border-left: 1px solid #c4c4c4;
  background: #e9e9e9;
`;

const StepList = styled.div`
  height: 57px;
  padding: 0 4px 0 3px;
  display: flex;
  flex-direction: column;
`;

const StepButton = styled.button`
  height: 19px;
  padding: 0;
  display: flex;
  align-items: center;
  gap: 4px;
  font-size: 10px;
  white-space: nowrap;
  border: 0;
  background: none;
`;

const Collapse = styled.button`
  margin-left: auto;
  padding: 0 5px 2px;
  display: flex;
  align-items: flex-end;
  border: 0;
  background: none;
`;

const Main = styled.main`
  flex: 1;
  display: flex;
`;

const Column = styled.div`
  display: flex;
  flex-direction: column;
`;

const LeftColumn = styled(Column)`
  width: 347px;
  flex: none;
  border-right: 2px solid #c6c6c6;
`;

const CenterColumn = styled(Column)`
  flex: 1;
  min-width: 0;
`;

const RightColumn = styled(Column)`
  width: 289px;
  flex: none;
  border-left: 1px solid #b5b5b5;
`;

const PanelHead = styled.div`
  height: 18px;
  padding: 0 ${(p) => (p.$plain ? 10 : 9)}px 0 ${(p) => (p.$plain ? 6 : 4)}px;
  display: flex;
  align-items: center;
  gap: 7px;
  color: ${(p) => (p.$dark ? "#d5dfe8" : "#555")};
  background: ${(p) => (p.$dark ? navy : "#fafafa")};
  border-bottom: 1px solid ${(p) => (p.$dark ? navy : line)};
`;

const PanelTitle = styled.h2`
  flex: 1;
  margin: 0;
  font-size: 10px;
  font-weight: 400;
`;

const SubTabs = styled.nav`
  height: 21px;
  padding: 0 4px 0 ${(p) => (p.$line ? 5 : 3)}px;
  display: flex;
  align-items: center;
  gap: ${(p) => (p.$line ? 8 : 7)}px;
  background: ${(p) => (p.$line ? "#fafafa" : "#fff")};
  border-bottom: 1px solid ${(p) => (p.$line ? line : "#fff")};
`;

const SubTab = styled.a`
  font-weight: ${(p) => (p.$on ? 700 : 400)};
  color: ${(p) => (p.$on ? "#3a5bc7" : "#333")};
  text-decoration: none;
`;

const TabsEnd = styled.span`
  margin-left: auto;
`;

const SearchRow = styled.div`
  height: 23px;
  padding: 0 3px;
  display: flex;
  align-items: center;
  gap: 2px;
`;

const SearchBox = styled.label`
  flex: 1;
  height: 18px;
  margin-right: 3px;
  padding-right: 1px;
  display: flex;
  align-items: center;
  border: 1px solid #b9b9b9;
  background: #fff;
`;

const SearchInput = styled.input`
  flex: 1;
  min-width: 0;
  height: 16px;
  border: 0;
  outline: 0;
`;

const SquareButton = styled.button`
  width: 19px;
  height: 18px;
  padding: 0;
  display: flex;
  align-items: center;
  justify-content: center;
  border: 1px solid ${(p) => (p.disabled ? "#dadada" : "#a8a8a8")};
  border-radius: 3px;
  background: #f8f8f8;
`;

const TreeArea = styled.div`
  flex: 1;
  display: flex;
  border-left: 1px solid #d0d0d0;
`;

const TreeMain = styled.div`
  flex: 1;
  min-width: 0;
`;

const TreeTable = styled.table`
  width: 100%;
  table-layout: fixed;
  border-collapse: separate;
  border-spacing: 0;
`;

const NameCol = styled.col`
  width: 160px;
`;

const SizeCol = styled.col`
  width: 66px;
`;

const TreeHead = styled.th`
  height: 21px;
  padding: 0 3px;
  text-align: left;
  background: #ebebeb;
  border-right: 1px solid ${line};
  border-top: 1px solid ${line};
  border-bottom: 1px solid ${line};
`;

const TreeRow = styled.tr`
  background: ${(p) => (p.$selected ? "#e1effb" : "#fff")};
`;

const TreeCell = styled.td`
  height: 20px;
  padding: 0 0 0 3px;
  white-space: nowrap;
  overflow: hidden;
  border-right: 1px solid ${line};
  border-bottom: 1px solid ${line};
`;

const NameBox = styled.div`
  padding-left: ${(p) => p.$level * 7}px;
  display: flex;
  align-items: center;
  gap: 4px;
`;

const CaretBox = styled.span`
  width: 8px;
  flex: none;
  display: flex;
  justify-content: center;
`;

const Gutter = styled.div`
  width: 14px;
  flex: none;
  padding: ${(p) => (p.$head ? 26 : 6)}px 0 6px;
  display: flex;
  flex-direction: column;
  justify-content: space-between;
  align-items: center;
  background: #efefef;
`;

const Explorer = styled.section`
  height: 136px;
  flex: none;
  display: flex;
  flex-direction: column;
  border-top: 1px solid #b5b5b5;
`;

const ExplorerBody = styled.div`
  flex: 1;
  display: flex;
`;

const ExplorerContent = styled.div`
  flex: 1;
`;

const Overlay = styled.div`
  padding: 3px 3px 6px;
  border-bottom: 2px solid #e5e5e5;
`;

const OverlayTitle = styled.h3`
  margin: 0;
  font-size: 10px;
  font-weight: 400;
  color: #111;
`;

const KeepLabel = styled.label`
  padding: 2px 0 0 9px;
  display: flex;
  align-items: center;
  gap: 4px;
  color: #b5b5b5;
`;

const CheckBox = styled.input`
  appearance: none;
  width: 12px;
  height: 12px;
  flex: none;
  margin: 0;
  display: grid;
  place-content: center;
  border: 1px solid ${(p) => (p.disabled ? "#dadada" : "#9a9a9a")};
  background: #f8f8f8;

  &:checked::after {
    content: "";
    width: 4px;
    height: 7px;
    margin-bottom: 2px;
    border: solid #222;
    border-width: 0 2px 2px 0;
    transform: rotate(40deg);
  }
`;

const DropHint = styled.div`
  padding: 6px 3px;
  display: flex;
  align-items: center;
  gap: 4px;
  font-style: italic;
`;

const StatusBar = styled.footer`
  height: 19px;
  padding: 0 5px;
  display: flex;
  align-items: center;
  justify-content: ${(p) => (p.$end ? "flex-end" : "flex-start")};
  background: ${(p) => (p.$grey ? ribbonGrey : "#fafafa")};
  border-top: 1px solid #c0c0c0;
`;

const DocTabs = styled.div`
  height: 19px;
  padding: 0 12px 0 1px;
  display: flex;
  align-items: center;
  background: #fafafa;
  border-bottom: 1px solid ${line};
`;

const Grip = styled.span`
  width: 4px;
  height: 9px;
  margin-right: 2px;
  background: repeating-linear-gradient(#d0d0d0 0 1px, #fafafa 1px 2px);
`;

const DocTab = styled.button`
  height: 18px;
  padding: 0 3px 0 6px;
  display: flex;
  align-items: center;
  gap: 5px;
  color: ${(p) => (p.$link ? "#3a5bc7" : p.$on ? "#444" : "#777")};
  background: ${(p) => (p.$on ? "#fff" : "#dedede")};
  border: 0;
  border-top: 2px solid #9a9a9a;
  border-right: 1px solid ${line};
`;

const TabGap = styled.span`
  width: 3px;
`;

const TabClose = styled.span`
  font-size: 10px;
  font-weight: 700;
  color: ${(p) => (p.$on ? "#888" : "#aaa")};
`;

const AddTab = styled.button`
  margin: 0 auto 0 8px;
  padding: 0;
  border: 0;
  background: none;
`;

const PlotArea = styled.div`
  flex: 1;
  min-height: 0;
  background: #fff;
`;

const ChartSvg = styled.svg`
  width: 100%;
  height: auto;
`;

const ChartText = styled.text`
  font-family: ${sans};
  font-size: 11px;
  fill: #444;
`;

const ChartTitle = styled(ChartText)`
  font-size: 12px;
`;

const EditorBody = styled.div`
  flex: 1;
  padding: 11px 0 0 5px;
  display: flex;
`;

const SideStrip = styled.span`
  width: 6px;
  margin: 2px 0 6px;
  background: #ebebeb;
`;

const EditorContent = styled.div`
  flex: 1;
  padding-left: 4px;
`;

const SliceWrap = styled.div`
  margin: 0 3px 0 4px;
  display: flex;
  border: 1px solid ${line};
`;

const SliceTable = styled.table`
  flex: 1;
  border-collapse: separate;
  border-spacing: 0;
`;

const SliceHead = styled.th`
  width: ${(p) => (p.$w ? `${p.$w}px` : "auto")};
  height: 20px;
  padding: 0 4px;
  text-align: left;
  background: #ebebeb;
  border-bottom: 1px solid ${line};
`;

const SliceCell = styled.td`
  height: 19px;
  padding: 0 4px;
  color: ${(p) => (p.$muted ? "#76869b" : "#333")};
  border-bottom: 1px solid ${line};
`;

const SliceGutter = styled.div`
  width: 13px;
  padding: 1px 2px;
  background: #ebebeb;
  border-left: 1px solid ${line};
`;

const GreenMark = styled.div`
  height: 8px;
  border: 1px solid #63c763;
  border-radius: 1px;
  background: #80dc80;
`;

const MatchLabel = styled.label`
  height: 28px;
  padding: 3px 4px 0;
  display: flex;
  align-items: center;
  gap: 4px;
  color: #333;
  border-bottom: 2px solid #dadada;
`;

const ResponseHead = styled.div`
  height: 21px;
  padding: 0 32px 0 4px;
  display: flex;
  align-items: center;
  gap: 8px;
  color: #111;
`;

const CreateSet = styled.button`
  margin-left: auto;
  padding: 0;
  color: #c4c4c4;
  border: 0;
  background: none;
`;

/* the rows share out whatever the fixed height leaves over */
const ResponseTable = styled.table`
  width: calc(100% - 7px);
  height: 251px;
  margin-left: 4px;
  table-layout: fixed;
  border-collapse: separate;
  border-spacing: 0;
  border: 1px solid #cfcfcf;
`;

const CheckHead = styled.td`
  width: 24px;
  height: 20px;
  background: #ebebeb;
`;

const ColorHead = styled.th`
  width: 35px;
  height: 20px;
  padding: 0 3px;
  text-align: left;
  color: #666;
  background: #ebebeb;
`;

const NameHead = styled.th`
  height: 20px;
  padding: 0 4px;
  text-align: left;
  background: #ebebeb;
  border-left: 1px solid ${line};
`;

const MarkCell = styled.td`
  padding: 0 4px;
  box-shadow: inset 0 -1px ${line};
`;

const ResponseName = styled.td`
  height: ${(p) => (p.$single ? "19px" : "auto")};
  padding: 0 0 0 3px;
  white-space: nowrap;
  color: #76869b;
  border-left: 1px solid ${line};
  box-shadow: inset 0 -1px ${line};
`;

const Swatch = styled.span`
  width: 13px;
  height: 13px;
  display: block;
  background: ${(p) => p.$color};
  border: 1px solid rgba(90, 90, 90, 0.35);
`;

const EndRule = styled.div`
  height: 1px;
  margin-top: 6px;
  background: #cfcfcf;
`;

const ScrollRow = styled.div`
  height: 13px;
  padding: 0 5px;
  display: flex;
  align-items: center;
  gap: 4px;
  background: #f0f0f0;
`;

const ScrollThumb = styled.span`
  flex: 1;
  height: 10px;
  margin-right: 8px;
  background: #c0c0c0;
`;

const CalloutBox = styled.span`
  position: absolute;
  left: ${(p) => p.$x}px;
  top: ${(p) => p.$y}px;
  width: ${(p) => p.$w}px;
  height: ${(p) => p.$h}px;
  border: 1px solid #b80000;
  border-radius: ${(p) => p.$r}px;
  pointer-events: none;
`;

const CalloutNumber = styled.span`
  position: absolute;
  left: 10px;
  top: ${(p) => p.$y}px;
  font-family: "Open Sans", sans-serif;
  font-size: 14px;
  line-height: 20px;
  color: #c00000;
`;

const ArrowSvg = styled.svg`
  position: absolute;
  left: 115px;
  top: 337px;
  pointer-events: none;
`;

const CursorSvg = styled.svg`
  position: absolute;
  left: 1026px;
  top: 328px;
  pointer-events: none;
`;

export default App;
